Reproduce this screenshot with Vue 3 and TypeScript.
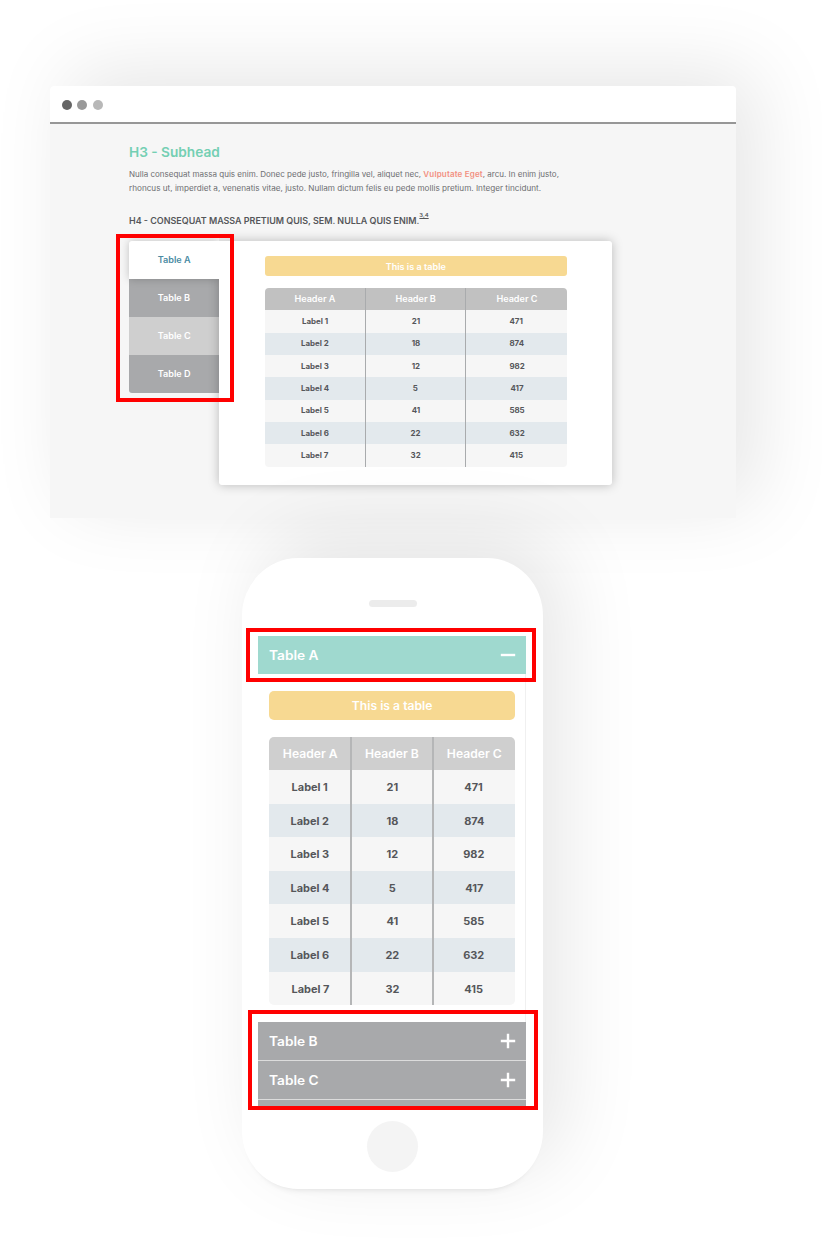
<script setup lang="ts">
interface Row { label: string; b: string; c: string }

const headers: string[] = ['Header A', 'Header B', 'Header C']
const rows: Row[] = [
  { label: 'Label 1', b: '21', c: '471' },
  { label: 'Label 2', b: '18', c: '874' },
  { label: 'Label 3', b: '12', c: '982' },
  { label: 'Label 4', b: '5', c: '417' },
  { label: 'Label 5', b: '41', c: '585' },
  { label: 'Label 6', b: '22', c: '632' },
  { label: 'Label 7', b: '32', c: '415' },
]
const tabs = [
  { name: 'Table A', kind: 'active' },
  { name: 'Table B', kind: 'idle' },
  { name: 'Table C', kind: 'hover' },
  { name: 'Table D', kind: 'idle' },
]
</script>

<template>
  <main class="stage">
    <section class="browser">
      <header class="chrome">
        <i class="dot d1"></i><i class="dot d2"></i><i class="dot d3"></i>
      </header>
      <div class="page">
        <h3><span>H3 - Subhead</span></h3>
        <p class="copy">
          <span class="l1">Nulla consequat massa quis enim. Donec pede justo, fringilla vel, aliquet nec, <a>Vulputate Eget</a>, arcu. In enim justo,</span>
          <span class="l2">rhoncus ut, imperdiet a, venenatis vitae, justo. Nullam dictum felis eu pede mollis pretium. Integer tincidunt.</span>
        </p>
        <h4><span>H4 - CONSEQUAT MASSA PRETIUM QUIS, SEM. NULLA QUIS ENIM.<sup>3,4</sup></span></h4>
        <div class="tabbed">
          <nav class="tabs">
            <div v-for="t in tabs" :key="t.name" class="tab" :class="t.kind"><span>{{ t.name }}</span></div>
          </nav>
          <div class="card">
            <div class="banner"><span>This is a table</span></div>
            <div class="grid">
              <div class="row head"><div v-for="h in headers" :key="h" class="cell"><span>{{ h }}</span></div></div>
              <div v-for="r in rows" :key="r.label" class="row">
                <div class="cell"><span>{{ r.label }}</span></div>
                <div class="cell"><span>{{ r.b }}</span></div>
                <div class="cell"><span>{{ r.c }}</span></div>
              </div>
            </div>
          </div>
        </div>
      </div>
    </section>

    <section class="phone">
      <div class="speaker"></div>
      <div class="screen">
        <div class="bar open">
          <span>Table A</span>
          <svg width="16" height="16" viewBox="0 0 16 16"><path d="M0.8 8H15.2" /></svg>
        </div>
        <div class="panel">
          <div class="banner"><span>This is a table</span></div>
          <div class="grid">
            <div class="row head"><div v-for="h in headers" :key="h" class="cell"><span>{{ h }}</span></div></div>
            <div v-for="r in rows" :key="r.label" class="row">
              <div class="cell"><span>{{ r.label }}</span></div>
              <div class="cell"><span>{{ r.b }}</span></div>
              <div class="cell"><span>{{ r.c }}</span></div>
            </div>
          </div>
        </div>
        <div v-for="n in ['Table B', 'Table C']" :key="n" class="bar">
          <span>{{ n }}</span>
          <svg width="16" height="16" viewBox="0 0 16 16"><path d="M0.8 8H15.2M8 0.8V15.2" /></svg>
        </div>
        <div class="bar cut"></div>
      </div>
      <div class="home"></div>
    </section>

    <div class="mark m1"></div>
    <div class="mark m2"></div>
    <div class="mark m3"></div>
  </main>
</template>

<style>
body { background: #fff; }
</style>

<style scoped>
* { box-sizing: border-box; }
.stage {
  position: relative;
  width: 822px;
  height: 1238px;
  overflow: hidden;
  padding-top: 86px;
  background: #fff;
  font-family: Inter, "Liberation Sans", sans-serif;
  color: #55565a;
}
.browser {
  width: 686px;
  height: 432px;
  margin-left: 50px;
  border-radius: 4px 4px 0 0;
  background: #f6f6f6;
  box-shadow: 20px -14px 80px rgba(0, 0, 0, 0.1);
}
.chrome {
  display: flex;
  align-items: center;
  gap: 5.4px;
  height: 38px;
  padding: 1px 0 0 12px;
  border-bottom: 2px solid #979797;
  border-radius: 4px 4px 0 0;
  background: #fff;
}
.dot { width: 10px; height: 10px; border-radius: 50%; }
.d1 { background: #656565; }
.d2 { background: #999; }
.d3 { background: #b8b8b8; }
.page { padding: 18px 0 0 79px; white-space: nowrap; }

/* Widened letterforms */
h3 span, h4 span, .copy > span {
  display: inline-block;
  transform: scaleX(1.035);
  transform-origin: 0 50%;
}
h3 {
  margin: 0;
  height: 20px;
  font-size: 13.2px;
  line-height: 20px;
  font-weight: 600;
  color: #74cfb3;
}
.copy {
  display: flex;
  flex-direction: column;
  align-items: flex-start;
  margin: 6.3px 0 0;
  font-size: 7.6px;
  line-height: 13.4px;
  color: #6c6d70;
}
.copy .l1 { transform: scaleX(1.056); }
.copy .l2 { transform: scaleX(1.073); }
.copy a { color: #f28f80; font-weight: 600; letter-spacing: 0.15px; }
h4 {
  margin: 15.7px 0 0;
  height: 20px;
  font-size: 8.3px;
  line-height: 20px;
  font-weight: 600;
}
h4 span { transform: scaleX(1.077); }
sup {
  position: relative;
  top: -3px;
  font-size: 5.4px;
  line-height: 0;
  text-decoration: underline;
}
.tabbed { display: flex; align-items: flex-start; margin-top: 10.2px; }
.tabs { width: 90px; }
.tab {
  display: flex;
  align-items: center;
  justify-content: center;
  height: 38.1px;
  font-size: 8.4px;
  font-weight: 600;
  color: #fff;
}
.tab span, .banner span, .cell span { transform: scaleX(1.085); }
.idle { background: #a8a9ab; }
.hover { background: #cfcfcf; }
.tab:last-child { border-radius: 0 0 0 3px; }
.active {
  position: relative;
  border-radius: 3px 0 0 0;
  background: #fff;
  color: #4a8ba3;
  box-shadow: 0 0 8px rgba(0, 0, 0, 0.22);
}
.card {
  position: relative;
  width: 393px;
  height: 244px;
  padding: 15.5px 45px 0 45.5px;
  border-radius: 0 3px 3px 3px;
  background: #fff;
  box-shadow: 0 0 11px rgba(0, 0, 0, 0.25);
  clip-path: polygon(0 -20px, 413px -20px, 413px 264px, -20px 264px, -20px 38px, 0 38px);
}
.banner {
  display: flex;
  align-items: center;
  justify-content: center;
  height: 20px;
  padding-top: 1px;
  border-radius: 3px;
  background: #f7d992;
  color: #fff;
  font-size: 8.4px;
  font-weight: 600;
}
.grid {
  position: relative;
  margin-top: 11.5px;
  border-radius: 4px;
  overflow: hidden;
}
.grid::before,
.grid::after {
  content: "";
  position: absolute;
  top: 0;
  bottom: 0;
  width: 1px;
  background: #a9abad;
}
.grid::before { left: 100.2px; }
.grid::after { left: 200.8px; }
.row { display: flex; height: 22.35px; background: #f6f6f6; }
.row:nth-child(odd):not(.head) { background: #e3e9ed; }
.row.head { background: #c1c1c1; color: #fff; }
.cell {
  display: flex;
  flex: 1;
  align-items: center;
  justify-content: center;
  font-size: 7.3px;
  font-weight: 700;
}
.head .cell { font-size: 8.4px; font-weight: 600; }

.phone {
  position: relative;
  width: 301px;
  height: 631px;
  margin: 40px 0 0 242px;
  border-radius: 56px / 58px;
  background: #fff;
  box-shadow: 20px -20px 80px rgba(0, 0, 0, 0.1), 0 8px 8px -10px rgba(0, 0, 0, 0.22);
  padding-top: 41.5px;
}
.speaker { width: 48px; height: 7.5px; margin: 0 auto; border-radius: 4px; background: #ececec; }
.screen { width: 268px; height: 470px; margin: 28.5px 0 0 16px; overflow: hidden; }
.bar {
  display: flex;
  align-items: center;
  justify-content: space-between;
  height: 39.2px;
  padding: 0 10.5px 0 11px;
  border-bottom: 1px solid #dcdcdc;
  background: #a8a9ab;
  color: #fff;
  font-size: 12.8px;
  font-weight: 600;
}
.bar span { transform: scaleX(1.07); transform-origin: 0 50%; }
.bar.open { height: 38.5px; padding-top: 0.6px; border: 0; background: #9fd9cf; }
.bar.cut { border: 0; }
.bar svg { fill: none; stroke: #fff; stroke-width: 2.4; }
.panel {
  height: 348px;
  padding: 17px 10px 0 11px;
  border-right: 1px solid #f0f0f0;
}
.panel .banner { height: 28.5px; padding: 1px 0 0; border-radius: 5px; font-size: 11.2px; }
.panel .grid { margin-top: 17px; border-radius: 5px; }
.panel .grid::before,
.panel .grid::after { width: 1.6px; background: #b5b6b7; }
.panel .grid::before { left: 81.4px; }
.panel .grid::after { left: 163.4px; }
.panel .row { height: 33.58px; }
.panel .row.head { background: #cfcfcf; }
.panel .cell { padding-top: 0.6px; font-size: 10.1px; }
.panel .head .cell { padding-top: 1.4px; font-size: 11.2px; }
.home { width: 51px; height: 51px; margin: 15.5px auto 0; border-radius: 50%; background: #f4f4f4; }

/* Callout frames lying over both mock-ups */
.mark { position: absolute; border: 4px solid #f00; }
.m1 { left: 116px; top: 234px; width: 118px; height: 168px; }
.m2 { left: 246px; top: 628px; width: 290px; height: 54px; }
.m3 { left: 248px; top: 1010px; width: 290px; height: 100px; }
</style>
